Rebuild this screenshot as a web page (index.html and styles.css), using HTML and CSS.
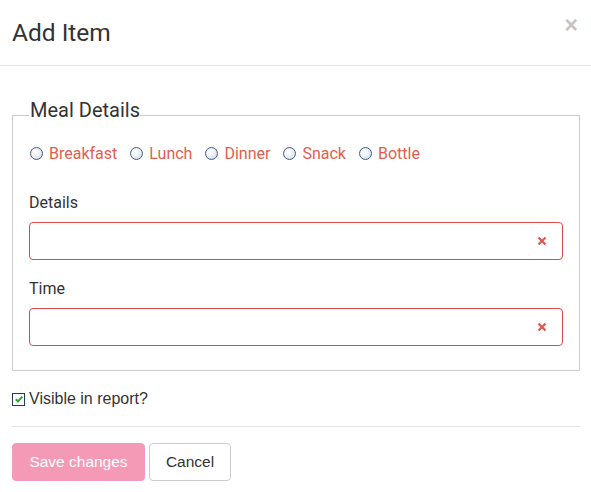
FILE: index.html
```html
<!DOCTYPE html>
<html>
<head>
<meta charset="utf-8">
<link rel="stylesheet" href="styles.css">
</head>
<body>
<div class="modal">
  <div class="modal-header">
    <h4 class="title">Add Item</h4>
    <span class="close">&times;</span>
  </div>
  <div class="modal-body">
    <fieldset class="meal">
      <legend>Meal Details</legend>
      <div class="radios">
        <label class="radio"><input type="radio" name="meal"><span>Breakfast</span></label>
        <label class="radio"><input type="radio" name="meal"><span>Lunch</span></label>
        <label class="radio"><input type="radio" name="meal"><span>Dinner</span></label>
        <label class="radio"><input type="radio" name="meal"><span>Snack</span></label>
        <label class="radio"><input type="radio" name="meal"><span>Bottle</span></label>
      </div>
      <div class="field">
        <label class="field-label">Details</label>
        <div class="input">
          <svg class="clear" width="10" height="10" viewBox="0 0 10 10"><path d="M1.5 1.5L8.5 8.5M8.5 1.5L1.5 8.5" stroke="#e05550" stroke-width="2.2" stroke-linecap="butt"/></svg>
        </div>
      </div>
      <div class="field">
        <label class="field-label">Time</label>
        <div class="input">
          <svg class="clear" width="10" height="10" viewBox="0 0 10 10"><path d="M1.5 1.5L8.5 8.5M8.5 1.5L1.5 8.5" stroke="#e05550" stroke-width="2.2" stroke-linecap="butt"/></svg>
        </div>
      </div>
    </fieldset>
    <label class="check">
      <span class="box"><svg width="10" height="10" viewBox="0 0 10 10"><path d="M1.8 5.2L4 7.4L8.4 2.6" fill="none" stroke="#2aa52a" stroke-width="2"/></svg></span>
      <span>Visible in report?</span>
    </label>
    <hr class="sep">
    <div class="buttons">
      <button class="btn primary">Save changes</button>
      <button class="btn default">Cancel</button>
    </div>
  </div>
</div>
</body>
</html>
```
FILE: styles.css
```css
html, body {
  margin: 0;
  padding: 0;
  background: #fff;
}
body {
  font-family: Roboto, "Liberation Sans", sans-serif;
  color: #333;
}
.modal-header {
  height: 65px;
  border-bottom: 1px solid #e5e5e5;
  display: flex;
  justify-content: space-between;
  padding: 0 12px;
}
.title {
  margin: 0;
  font-weight: 400;
  font-size: 24.5px;
  line-height: 65px;
  color: #333;
}
.close {
  font-family: "Liberation Sans", sans-serif;
  font-weight: bold;
  font-size: 23px;
  line-height: 1;
  color: #c4c4c4;
  margin-top: 14px;
  margin-right: 1px;
}
.modal-body {
  padding: 34px 11px 12px 12px;
}
.meal {
  margin: 0;
  border: 1px solid #cccccc;
  padding: 0 16px 24px 16px;
}
.meal legend {
  padding: 0 0 10px 1px;
  font-size: 20px;
  line-height: 20px;
  color: #333;
}
.radios {
  display: flex;
  gap: 13px;
  margin-top: 14px;
  padding-left: 1px;
  line-height: 20px;
}
.radio {
  display: flex;
  align-items: center;
  gap: 6px;
  font-size: 16px;
  color: #e35d4f;
}
.radio input {
  appearance: none;
  -webkit-appearance: none;
  margin: 0;
  width: 13px;
  height: 13px;
  border-radius: 50%;
  border: 1px solid #3d5f86;
  background: radial-gradient(circle at 40% 40%, #ffffff 0%, #eef0f2 45%, #c9cfd6 100%);
  box-sizing: border-box;
  position: relative;
  top: -1px;
}
.field {
  display: flex;
  flex-direction: column;
}
.radios + .field {
  margin-top: 29px;
}
.field + .field {
  margin-top: 19px;
}
.field-label {
  font-size: 16px;
  line-height: 20px;
  margin-bottom: 9px;
  color: #333;
}
.input {
  height: 38px;
  box-sizing: border-box;
  border: 1px solid #dd4b47;
  border-radius: 4px;
  display: flex;
  align-items: center;
  justify-content: flex-end;
  padding-right: 15px;
}
.check {
  display: flex;
  align-items: center;
  gap: 4px;
  margin-top: 18px;
  font-family: "Liberation Sans", sans-serif;
  font-size: 16px;
  line-height: 20px;
  color: #333;
}
.box {
  width: 13px;
  height: 13px;
  box-sizing: border-box;
  border: 1px solid #1e3c5c;
  background: #fff;
  display: flex;
  align-items: center;
  justify-content: center;
}
.sep {
  border: 0;
  border-top: 1px solid #e5e5e5;
  margin: 17px 0 16px 0;
}
.buttons {
  display: flex;
  gap: 4px;
}
.btn {
  font-family: "Liberation Sans", sans-serif;
  font-size: 15.5px;
  height: 38px;
  border-radius: 4px;
  padding: 0 10px;
  box-sizing: border-box;
}
.primary {
  background: #f49ab7;
  border: 1px solid #f49ab7;
  color: #fff;
  width: 133px;
}
.default {
  background: #fff;
  border: 1px solid #cccccc;
  color: #333;
  width: 82px;
}
```
